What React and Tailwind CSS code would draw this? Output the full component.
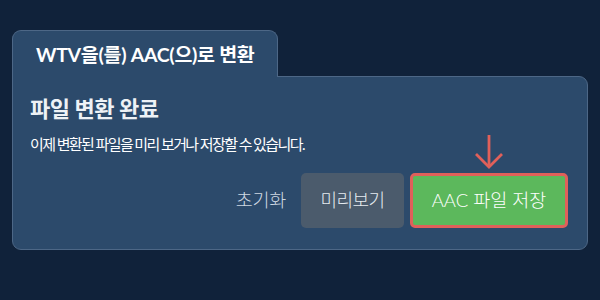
import React from "react";

const font = { fontFamily: 'Lato, "Noto Sans CJK KR", sans-serif' };

function DownArrow() {
  return (
    <svg width="30" height="36" viewBox="0 0 30 36" fill="none" stroke="#e0605a" strokeWidth="2.8" strokeLinecap="butt">
      <path d="M15 1 V33" />
      <path d="M2 20 L15 33 L28 20" />
    </svg>
  );
}

export default function App() {
  return (
    <div className="w-[600px] h-[300px] bg-[#10223a] pt-[30px] px-[12px]" style={font}>
      <div className="w-[576px]">
        {/* tab */}
        <div className="flex">
          <div className="w-[266px] h-[47px] bg-[#2c4a6b] border border-b-0 border-[#4d6786] rounded-t-[9px] pl-[23px] pt-[9px] relative z-10 -mb-px">
            <span className="text-white text-[19.5px] font-bold tracking-[-0.3px]">WTV을(를) AAC(으)로 변환</span>
          </div>
        </div>
        {/* panel */}
        <div className="h-[174px] bg-[#2c4a6b] border border-[#4d6786] rounded-b-[9px] rounded-tr-[9px] px-[17px] pt-[17px]">
          <h2 className="text-[#eef2f6] text-[22px] font-semibold leading-[30px] tracking-[-0.5px]">파일 변환 완료</h2>
          <p className="text-white text-[15px] leading-[20px] mt-[10px] tracking-[-1.6px]">이제 변환된 파일을 미리 보거나 저장할 수 있습니다.</p>
          <div className="flex justify-end items-center mt-[19px] pr-[2px]">
            <span className="text-[#cfd8e2] text-[18.5px] font-light mr-[15px] tracking-[-0.3px]">초기화</span>
            <button className="w-[103px] h-[55px] bg-[#4b5b6c] rounded-[5px] text-[#e6ebf0] text-[18px] font-light tracking-[-0.5px] mr-[6px]">미리보기</button>
            <div className="relative">
              <div className="absolute left-1/2 -translate-x-1/2 bottom-full mb-[3px]">
                <DownArrow />
              </div>
              <button className="w-[158px] h-[55px] bg-[#5cb85c] border-[3px] border-[#e0605a] rounded-[5px] text-white text-[18.5px] font-light">AAC 파일 저장</button>
            </div>
          </div>
        </div>
      </div>
    </div>
  );
}
